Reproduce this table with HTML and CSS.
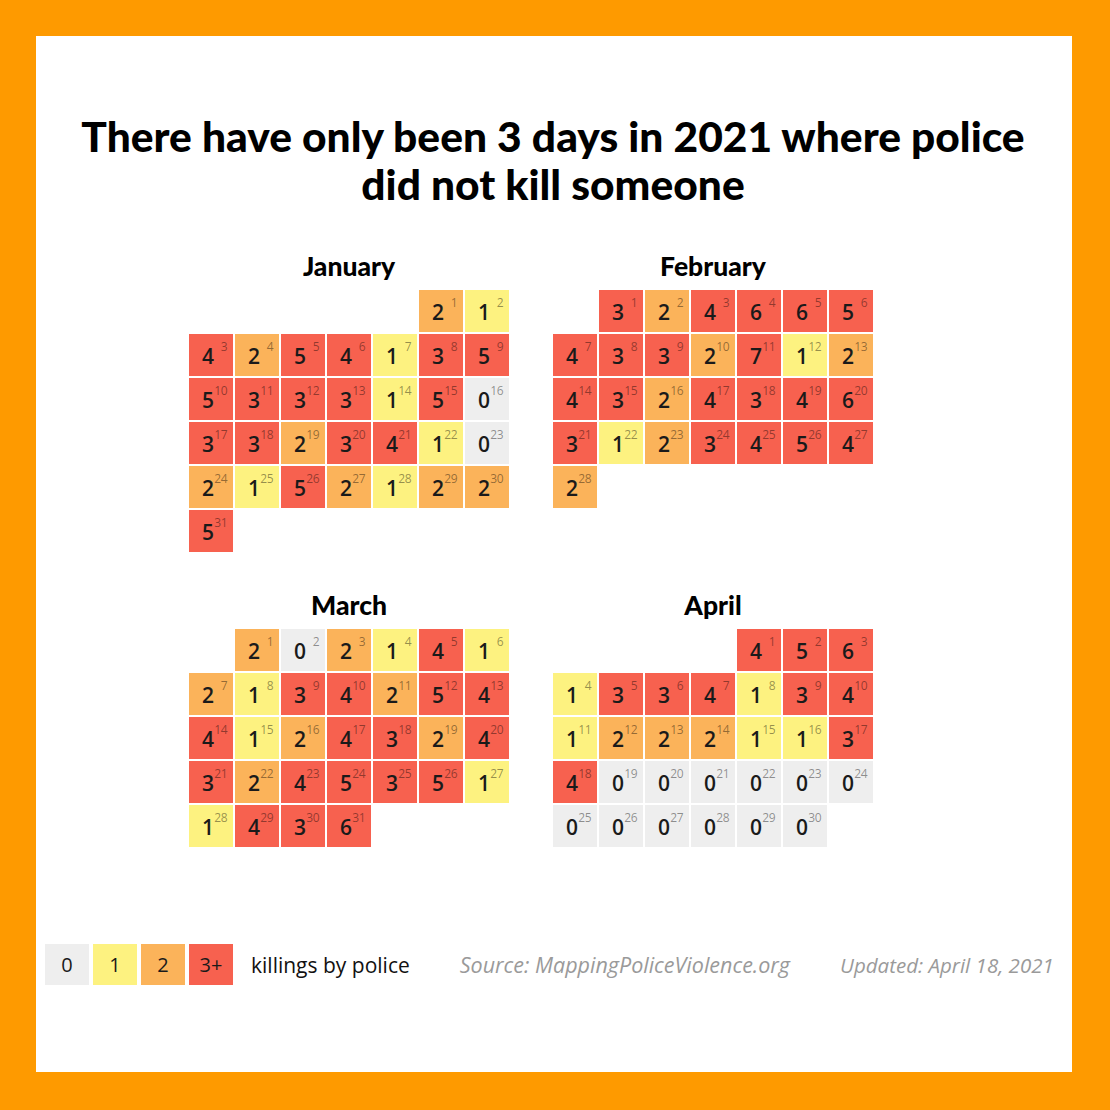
FILE: index.html
```html
<!DOCTYPE html>
<html lang="en">
<head>
<meta charset="utf-8">
<title>Police killings 2021</title>
<link rel="stylesheet" href="styles.css">
</head>
<body>
<main class="card">
  <h1 class="title">There have only been 3 days in 2021 where police<br>did not kill someone</h1>

  <section class="months">
    <div class="month">
      <h2 class="month-name">January</h2>
      <div class="grid">
        <div class="cell v2 s6"><span class="n">2</span><span class="d">1</span></div>
        <div class="cell v1"><span class="n">1</span><span class="d">2</span></div>
        <div class="cell v3"><span class="n">4</span><span class="d">3</span></div>
        <div class="cell v2"><span class="n">2</span><span class="d">4</span></div>
        <div class="cell v3"><span class="n">5</span><span class="d">5</span></div>
        <div class="cell v3"><span class="n">4</span><span class="d">6</span></div>
        <div class="cell v1"><span class="n">1</span><span class="d">7</span></div>
        <div class="cell v3"><span class="n">3</span><span class="d">8</span></div>
        <div class="cell v3"><span class="n">5</span><span class="d">9</span></div>
        <div class="cell v3"><span class="n">5</span><span class="d">10</span></div>
        <div class="cell v3"><span class="n">3</span><span class="d">11</span></div>
        <div class="cell v3"><span class="n">3</span><span class="d">12</span></div>
        <div class="cell v3"><span class="n">3</span><span class="d">13</span></div>
        <div class="cell v1"><span class="n">1</span><span class="d">14</span></div>
        <div class="cell v3"><span class="n">5</span><span class="d">15</span></div>
        <div class="cell v0"><span class="n">0</span><span class="d">16</span></div>
        <div class="cell v3"><span class="n">3</span><span class="d">17</span></div>
        <div class="cell v3"><span class="n">3</span><span class="d">18</span></div>
        <div class="cell v2"><span class="n">2</span><span class="d">19</span></div>
        <div class="cell v3"><span class="n">3</span><span class="d">20</span></div>
        <div class="cell v3"><span class="n">4</span><span class="d">21</span></div>
        <div class="cell v1"><span class="n">1</span><span class="d">22</span></div>
        <div class="cell v0"><span class="n">0</span><span class="d">23</span></div>
        <div class="cell v2"><span class="n">2</span><span class="d">24</span></div>
        <div class="cell v1"><span class="n">1</span><span class="d">25</span></div>
        <div class="cell v3"><span class="n">5</span><span class="d">26</span></div>
        <div class="cell v2"><span class="n">2</span><span class="d">27</span></div>
        <div class="cell v1"><span class="n">1</span><span class="d">28</span></div>
        <div class="cell v2"><span class="n">2</span><span class="d">29</span></div>
        <div class="cell v2"><span class="n">2</span><span class="d">30</span></div>
        <div class="cell v3"><span class="n">5</span><span class="d">31</span></div>
      </div>
    </div>

    <div class="month">
      <h2 class="month-name">February</h2>
      <div class="grid">
        <div class="cell v3 s2"><span class="n">3</span><span class="d">1</span></div>
        <div class="cell v2"><span class="n">2</span><span class="d">2</span></div>
        <div class="cell v3"><span class="n">4</span><span class="d">3</span></div>
        <div class="cell v3"><span class="n">6</span><span class="d">4</span></div>
        <div class="cell v3"><span class="n">6</span><span class="d">5</span></div>
        <div class="cell v3"><span class="n">5</span><span class="d">6</span></div>
        <div class="cell v3"><span class="n">4</span><span class="d">7</span></div>
        <div class="cell v3"><span class="n">3</span><span class="d">8</span></div>
        <div class="cell v3"><span class="n">3</span><span class="d">9</span></div>
        <div class="cell v2"><span class="n">2</span><span class="d">10</span></div>
        <div class="cell v3"><span class="n">7</span><span class="d">11</span></div>
        <div class="cell v1"><span class="n">1</span><span class="d">12</span></div>
        <div class="cell v2"><span class="n">2</span><span class="d">13</span></div>
        <div class="cell v3"><span class="n">4</span><span class="d">14</span></div>
        <div class="cell v3"><span class="n">3</span><span class="d">15</span></div>
        <div class="cell v2"><span class="n">2</span><span class="d">16</span></div>
        <div class="cell v3"><span class="n">4</span><span class="d">17</span></div>
        <div class="cell v3"><span class="n">3</span><span class="d">18</span></div>
        <div class="cell v3"><span class="n">4</span><span class="d">19</span></div>
        <div class="cell v3"><span class="n">6</span><span class="d">20</span></div>
        <div class="cell v3"><span class="n">3</span><span class="d">21</span></div>
        <div class="cell v1"><span class="n">1</span><span class="d">22</span></div>
        <div class="cell v2"><span class="n">2</span><span class="d">23</span></div>
        <div class="cell v3"><span class="n">3</span><span class="d">24</span></div>
        <div class="cell v3"><span class="n">4</span><span class="d">25</span></div>
        <div class="cell v3"><span class="n">5</span><span class="d">26</span></div>
        <div class="cell v3"><span class="n">4</span><span class="d">27</span></div>
        <div class="cell v2"><span class="n">2</span><span class="d">28</span></div>
      </div>
    </div>

    <div class="month">
      <h2 class="month-name">March</h2>
      <div class="grid">
        <div class="cell v2 s2"><span class="n">2</span><span class="d">1</span></div>
        <div class="cell v0"><span class="n">0</span><span class="d">2</span></div>
        <div class="cell v2"><span class="n">2</span><span class="d">3</span></div>
        <div class="cell v1"><span class="n">1</span><span class="d">4</span></div>
        <div class="cell v3"><span class="n">4</span><span class="d">5</span></div>
        <div class="cell v1"><span class="n">1</span><span class="d">6</span></div>
        <div class="cell v2"><span class="n">2</span><span class="d">7</span></div>
        <div class="cell v1"><span class="n">1</span><span class="d">8</span></div>
        <div class="cell v3"><span class="n">3</span><span class="d">9</span></div>
        <div class="cell v3"><span class="n">4</span><span class="d">10</span></div>
        <div class="cell v2"><span class="n">2</span><span class="d">11</span></div>
        <div class="cell v3"><span class="n">5</span><span class="d">12</span></div>
        <div class="cell v3"><span class="n">4</span><span class="d">13</span></div>
        <div class="cell v3"><span class="n">4</span><span class="d">14</span></div>
        <div class="cell v1"><span class="n">1</span><span class="d">15</span></div>
        <div class="cell v2"><span class="n">2</span><span class="d">16</span></div>
        <div class="cell v3"><span class="n">4</span><span class="d">17</span></div>
        <div class="cell v3"><span class="n">3</span><span class="d">18</span></div>
        <div class="cell v2"><span class="n">2</span><span class="d">19</span></div>
        <div class="cell v3"><span class="n">4</span><span class="d">20</span></div>
        <div class="cell v3"><span class="n">3</span><span class="d">21</span></div>
        <div class="cell v2"><span class="n">2</span><span class="d">22</span></div>
        <div class="cell v3"><span class="n">4</span><span class="d">23</span></div>
        <div class="cell v3"><span class="n">5</span><span class="d">24</span></div>
        <div class="cell v3"><span class="n">3</span><span class="d">25</span></div>
        <div class="cell v3"><span class="n">5</span><span class="d">26</span></div>
        <div class="cell v1"><span class="n">1</span><span class="d">27</span></div>
        <div class="cell v1"><span class="n">1</span><span class="d">28</span></div>
        <div class="cell v3"><span class="n">4</span><span class="d">29</span></div>
        <div class="cell v3"><span class="n">3</span><span class="d">30</span></div>
        <div class="cell v3"><span class="n">6</span><span class="d">31</span></div>
      </div>
    </div>

    <div class="month">
      <h2 class="month-name">April</h2>
      <div class="grid">
        <div class="cell v3 s5"><span class="n">4</span><span class="d">1</span></div>
        <div class="cell v3"><span class="n">5</span><span class="d">2</span></div>
        <div class="cell v3"><span class="n">6</span><span class="d">3</span></div>
        <div class="cell v1"><span class="n">1</span><span class="d">4</span></div>
        <div class="cell v3"><span class="n">3</span><span class="d">5</span></div>
        <div class="cell v3"><span class="n">3</span><span class="d">6</span></div>
        <div class="cell v3"><span class="n">4</span><span class="d">7</span></div>
        <div class="cell v1"><span class="n">1</span><span class="d">8</span></div>
        <div class="cell v3"><span class="n">3</span><span class="d">9</span></div>
        <div class="cell v3"><span class="n">4</span><span class="d">10</span></div>
        <div class="cell v1"><span class="n">1</span><span class="d">11</span></div>
        <div class="cell v2"><span class="n">2</span><span class="d">12</span></div>
        <div class="cell v2"><span class="n">2</span><span class="d">13</span></div>
        <div class="cell v2"><span class="n">2</span><span class="d">14</span></div>
        <div class="cell v1"><span class="n">1</span><span class="d">15</span></div>
        <div class="cell v1"><span class="n">1</span><span class="d">16</span></div>
        <div class="cell v3"><span class="n">3</span><span class="d">17</span></div>
        <div class="cell v3"><span class="n">4</span><span class="d">18</span></div>
        <div class="cell v0"><span class="n">0</span><span class="d">19</span></div>
        <div class="cell v0"><span class="n">0</span><span class="d">20</span></div>
        <div class="cell v0"><span class="n">0</span><span class="d">21</span></div>
        <div class="cell v0"><span class="n">0</span><span class="d">22</span></div>
        <div class="cell v0"><span class="n">0</span><span class="d">23</span></div>
        <div class="cell v0"><span class="n">0</span><span class="d">24</span></div>
        <div class="cell v0"><span class="n">0</span><span class="d">25</span></div>
        <div class="cell v0"><span class="n">0</span><span class="d">26</span></div>
        <div class="cell v0"><span class="n">0</span><span class="d">27</span></div>
        <div class="cell v0"><span class="n">0</span><span class="d">28</span></div>
        <div class="cell v0"><span class="n">0</span><span class="d">29</span></div>
        <div class="cell v0"><span class="n">0</span><span class="d">30</span></div>
      </div>
    </div>
  </section>

  <footer class="legend">
    <div class="keys">
      <div class="key v0">0</div>
      <div class="key v1">1</div>
      <div class="key v2">2</div>
      <div class="key v3">3+</div>
    </div>
    <span class="legend-label">killings by police</span>
    <span class="note source">Source: MappingPoliceViolence.org</span>
    <span class="note updated">Updated: April 18, 2021</span>
  </footer>
</main>
</body>
</html>
```

FILE: styles.css
```css
html, body {
  margin: 0;
  padding: 0;
}

body {
  background: #fe9a00;
  width: 1110px;
  height: 1110px;
  padding: 36px 0 0 36px;
  box-sizing: border-box;
  font-family: "Open Sans", "Liberation Sans", sans-serif;
  color: #111;
}

.card {
  width: 1036px;
  height: 1036px;
  background: #fff;
  box-sizing: border-box;
  padding-top: 76px;
  display: flex;
  flex-direction: column;
}

.title {
  margin: 0;
  font-family: Lato, "Open Sans", sans-serif;
  font-weight: 900;
  font-size: 42.5px;
  line-height: 48px;
  text-align: center;
  color: #000;
  padding-right: 2px;
}

.months {
  margin-top: 43px;
  padding-left: 153px;
  display: grid;
  grid-template-columns: 320px 320px;
  column-gap: 44px;
  row-gap: 38px;
  align-items: start;
}

.month {
  display: flex;
  flex-direction: column;
}

.month-name {
  margin: 0;
  height: 39px;
  font-family: Lato, "Open Sans", sans-serif;
  font-weight: 900;
  font-size: 26.5px;
  line-height: 30px;
  text-align: center;
  color: #000;
}

.grid {
  display: grid;
  grid-template-columns: repeat(7, 44px);
  grid-auto-rows: 42px;
  gap: 2px;
}

.cell {
  display: flex;
  justify-content: space-between;
  align-items: center;
  padding: 0 6px 0 13px;
}

.s2 { grid-column-start: 2; }
.s5 { grid-column-start: 5; }
.s6 { grid-column-start: 6; }

.n {
  font-size: 21px;
  font-weight: 600;
  line-height: 1;
  color: #1a1a1a;
  margin-top: 2px;
}

.d {
  display: flex;
  justify-content: flex-end;
  width: 13px;
  align-self: flex-start;
  margin-top: 7px;
  font-size: 12px;
  line-height: 12px;
  color: rgba(0, 0, 0, 0.42);
  letter-spacing: -0.5px;
}

.v0 { background: #eeeeee; }
.v1 { background: #fdf280; }
.v2 { background: #fbb35a; }
.v3 { background: #f7614f; }

.legend {
  margin-top: 97px;
  padding-left: 9px;
  display: flex;
  align-items: center;
}

.keys {
  display: flex;
  gap: 4px;
}

.key {
  width: 44px;
  height: 41px;
  display: flex;
  align-items: center;
  justify-content: center;
  font-size: 20px;
  font-weight: 500;
  color: #1a1a1a;
}

.legend-label {
  margin-left: 18px;
  font-size: 21px;
  color: #111;
}

.note {
  font-style: italic;
  font-size: 21.5px;
  color: #9a9a9a;
}

.source { margin-left: 50px; }
.updated {
  margin-left: 50px;
  font-size: 20.5px;
}
```
